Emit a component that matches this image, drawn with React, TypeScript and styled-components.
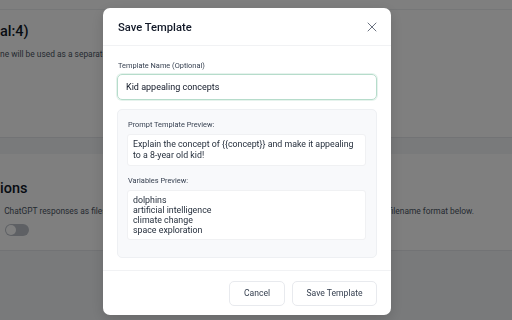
import React from "react";
import styled, { createGlobalStyle } from "styled-components";

const Global = createGlobalStyle`
  html, body { margin: 0; padding: 0; }
  body { font-family: Roboto, "Noto Sans", sans-serif; background: #f3f4f6; overflow: hidden; }
  * { box-sizing: border-box; }
`;

const Page = styled.div`
  width: 512px;
  height: 320px;
  background: #f3f4f6;
  display: flex;
  flex-direction: column;
`;

const Card = styled.section<{ $h: number }>`
  background: #ffffff;
  height: ${(p) => p.$h}px;
  border-bottom: 1px solid #e5e7eb;
  display: flex;
  flex-direction: column;
  flex-shrink: 0;
`;

const CardTop = styled.div`
  height: 10px;
  border-bottom: 1px solid #eceef1;
`;

const Heading = styled.h2`
  margin: 0;
  font-size: 14.5px;
  font-weight: 500;
  color: #111827;
  line-height: 18px;
  white-space: nowrap;
`;

const Desc = styled.p`
  margin: 0;
  font-size: 8.4px;
  color: #4b5563;
  white-space: nowrap;
`;

const CardBody = styled.div<{ $pt: number }>`
  padding: ${(p) => p.$pt}px 0 0 0;
  display: flex;
  flex-direction: column;
  gap: 8px;
`;

const Row = styled.div`
  display: flex;
  justify-content: space-between;
  padding-right: 38px;
`;

const Gap = styled.div`
  height: 16px;
  flex-shrink: 0;
`;

const Toggle = styled.div`
  margin-left: 5px;
  width: 24px;
  height: 12px;
  border-radius: 6px;
  background: #bcc1c9;
  position: relative;
  &::after {
    content: "";
    position: absolute;
    left: 1px;
    top: 1px;
    width: 10px;
    height: 10px;
    border-radius: 50%;
    background: #fff;
  }
`;

const Overlay = styled.div`
  position: fixed;
  inset: 0;
  background: rgba(0, 0, 0, 0.5);
  display: flex;
  align-items: flex-start;
  padding: 8px 0 0 103px;
`;

const Modal = styled.div`
  width: 288px;
  height: 307px;
  background: #ffffff;
  border-radius: 7px;
  display: flex;
  flex-direction: column;
  box-shadow: 0 4px 14px rgba(0, 0, 0, 0.15);
`;

const Header = styled.div`
  height: 38px;
  flex-shrink: 0;
  padding: 1px 15px 0 15px;
  display: flex;
  align-items: center;
  justify-content: space-between;
  border-bottom: 1px solid #f1f2f4;
`;

const Title = styled.h3`
  margin: 0;
  font-size: 11.2px;
  font-weight: 500;
  color: #111827;
`;

const Close = styled.button`
  border: 0;
  background: none;
  padding: 0;
  width: 14px;
  height: 14px;
  display: flex;
  align-items: center;
  justify-content: center;
  color: #6b7280;
  margin-right: -3px;
`;

const Body = styled.div`
  padding: 15px 14px 14px 14px;
  display: flex;
  flex-direction: column;
  flex: 1;
  min-height: 0;
`;

const Label = styled.label`
  display: block;
  font-size: 7.4px;
  color: #374151;
  line-height: 10px;
  margin: 0 0 3px 1px;
`;

const Input = styled.div`
  height: 26px;
  flex-shrink: 0;
  border: 1px solid #b6dccb;
  border-radius: 5px;
  padding: 0 8px;
  display: flex;
  align-items: center;
  font-size: 9px;
  color: #111827;
  box-shadow: 0 0 0 1px rgba(182, 220, 203, 0.35);
`;

const Preview = styled.div`
  margin-top: 9px;
  width: 260px;
  background: #f8f9fb;
  border: 1px solid #eef0f3;
  border-radius: 5px;
  padding: 10px 10px 17px 9px;
  display: flex;
  flex-direction: column;
`;

const PreviewLabel = styled.div`
  font-size: 7.4px;
  color: #374151;
  line-height: 10px;
  margin: 0 0 4px 1px;
`;

const PreviewBox = styled.div<{ $lh: number; $mb?: number }>`
  background: #ffffff;
  border: 1px solid #f0f1f3;
  border-radius: 3px;
  padding: 4px 5px;
  font-size: 8.8px;
  line-height: ${(p) => p.$lh}px;
  color: #1f2937;
  margin-bottom: ${(p) => p.$mb ?? 0}px;
  white-space: pre-line;
`;

const Footer = styled.div`
  height: 45px;
  flex-shrink: 0;
  border-top: 1px solid #f1f2f4;
  display: flex;
  justify-content: flex-end;
  align-items: center;
  gap: 7px;
  padding: 0 14px 0 0;
`;

const Button = styled.button<{ $w: number }>`
  width: ${(p) => p.$w}px;
  height: 25px;
  border: 1px solid #e8eaee;
  border-radius: 5px;
  background: #ffffff;
  font-family: Roboto, "Noto Sans", sans-serif;
  font-size: 8.6px;
  color: #374151;
  padding: 0;
`;

export default function App() {
  return (
    <>
      <Global />
      <Page>
        <Card $h={138}>
          <CardTop />
          <CardBody $pt={13}>
            <Heading>al:4)</Heading>
            <Desc>ne will be used as a separate</Desc>
          </CardBody>
        </Card>
        <Gap />
        <Card $h={97}>
          <CardBody $pt={26}>
            <Heading>ions</Heading>
            <Row>
              <Desc>&nbsp;&nbsp;ChatGPT responses as files</Desc>
              <Desc>e filename format below.</Desc>
            </Row>
            <Toggle />
          </CardBody>
        </Card>
      </Page>
      <Overlay>
        <Modal>
          <Header>
            <Title>Save Template</Title>
            <Close aria-label="Close">
              <svg width="10" height="10" viewBox="0 0 10 10" fill="none" stroke="currentColor" strokeWidth="1" strokeLinecap="round">
                <path d="M1 1L9 9M9 1L1 9" />
              </svg>
            </Close>
          </Header>
          <Body>
            <Label>Template Name (Optional)</Label>
            <Input>Kid appealing concepts</Input>
            <Preview>
              <PreviewLabel>Prompt Template Preview:</PreviewLabel>
              <PreviewBox $lh={11} $mb={10}>
                {"Explain the concept of {{concept}} and make it appealing\nto a 8-year old kid!"}
              </PreviewBox>
              <PreviewLabel>Variables Preview:</PreviewLabel>
              <PreviewBox $lh={10}>
                {"dolphins\nartificial intelligence\nclimate change\nspace exploration"}
              </PreviewBox>
            </Preview>
          </Body>
          <Footer>
            <Button $w={56}>Cancel</Button>
            <Button $w={85}>Save Template</Button>
          </Footer>
        </Modal>
      </Overlay>
    </>
  );
}
